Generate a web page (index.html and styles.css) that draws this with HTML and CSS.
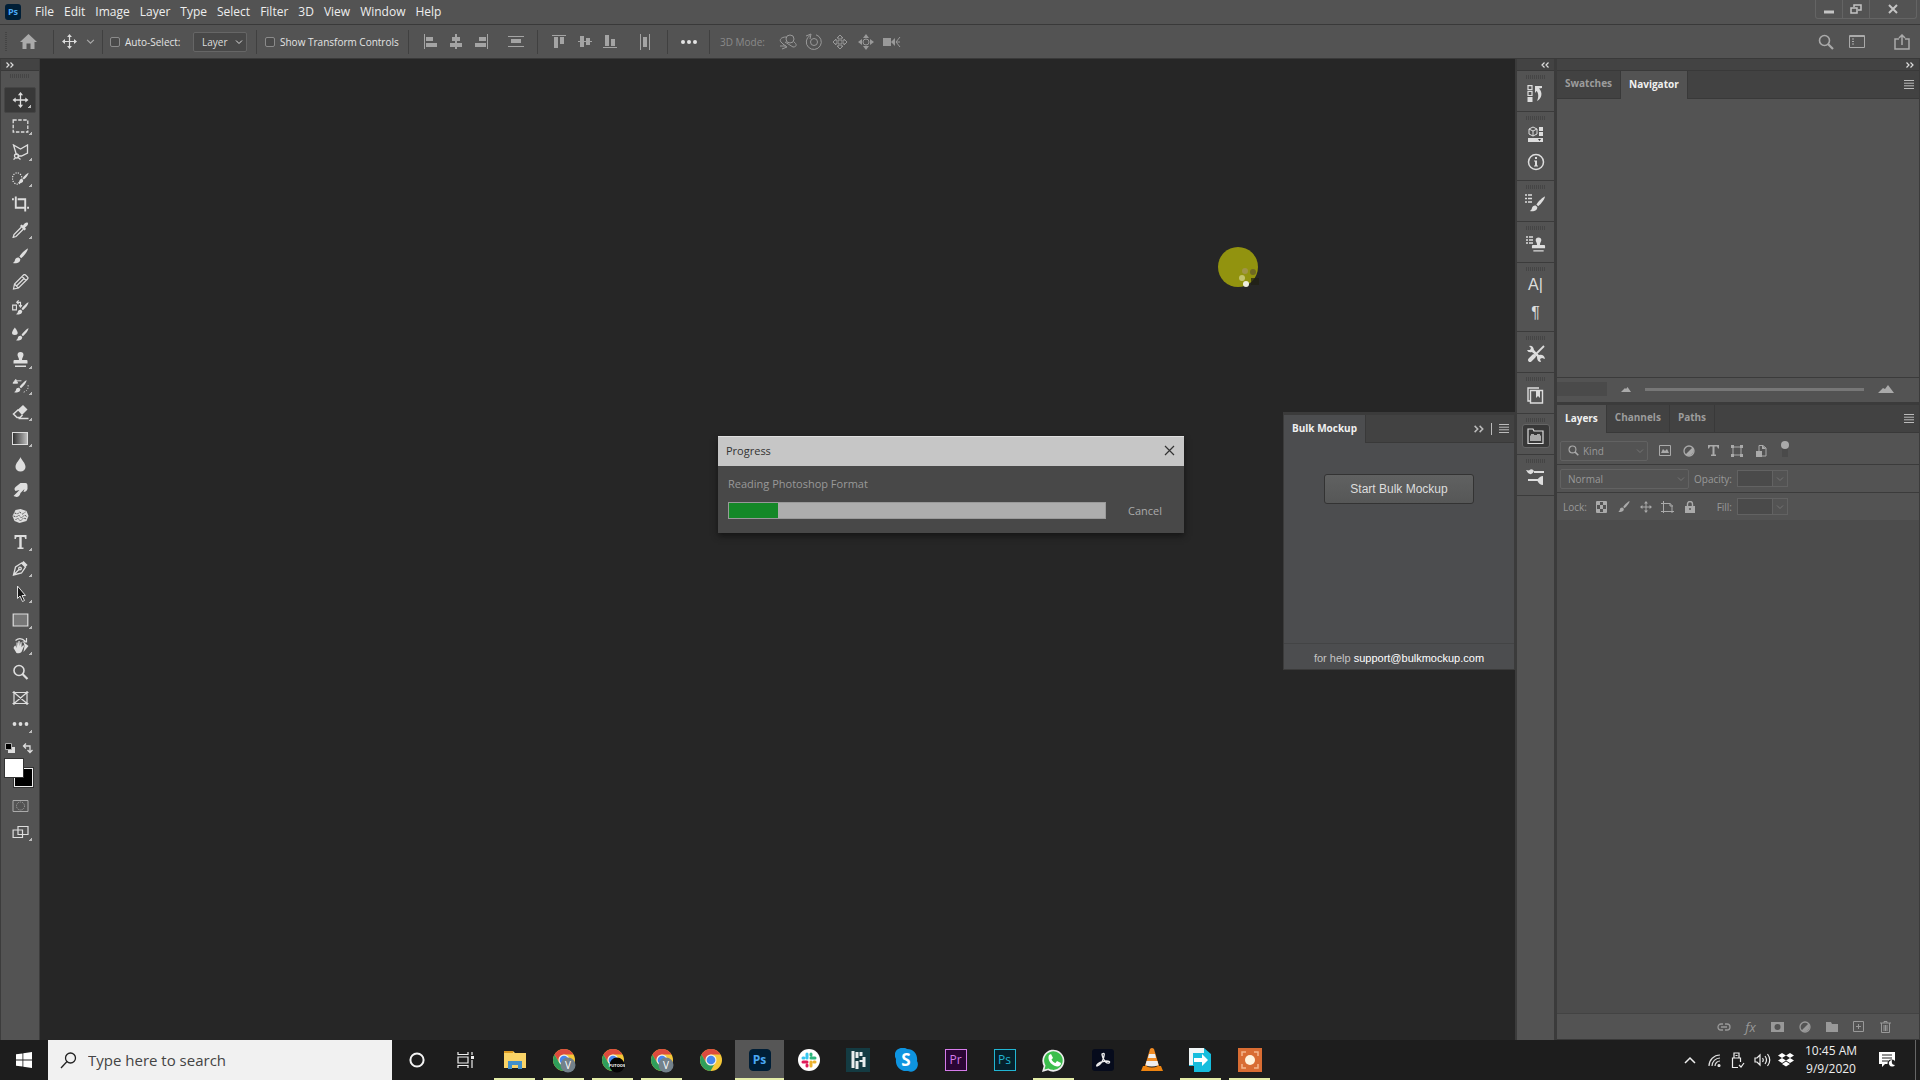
FILE: index.html
```
<!DOCTYPE html>
<html lang="en">

<head>
    <meta charset="UTF-8">
    <meta name="viewport" content="width=device-width, initial-scale=1.0">
    <title>Photoshop</title>
    <link rel="stylesheet" href="styles.css">
</head>

<body>
    <svg class="symbols" aria-hidden="true">
        <symbol id="move" viewBox="0 0 16 16">
            <path d="M8 2v12M2 8h12" fill="none" stroke="currentColor" stroke-width="1.3" />
            <path d="M8 0l2.6 3.2H5.4zM8 16l2.6-3.2H5.4zM0 8l3.2-2.6v5.2zM16 8l-3.2-2.6v5.2z" fill="currentColor" />
        </symbol>
        <symbol id="brush" viewBox="0 0 16 16">
            <path d="M15.5.5c-2 .6-6.500 4.500-8.600 8l1.800 1.700C12 7.500 15.200 3 15.500.5z" fill="currentColor" />
            <path d="M6.200 9.500c-2-.3-3.300.7-3.700 2.500C2.200 13.600 1.300 14.500.3 15c3 .9 7.700.2 7.500-3.900z" fill="currentColor" />
        </symbol>
        <symbol id="stamp" viewBox="0 0 16 16">
            <path d="M8 0a3 3 0 0 1 3 3c0 1.500-1.500 2.500-1.500 5H14q1 0 1 1v2.500H1V9q0-1 1-1h4.500c0-2.500-1.500-3.500-1.500-5a3 3 0 0 1 3-3zM2.500 13.500h11V15h-11z" fill="currentColor" />
        </symbol>
        <symbol id="chev" viewBox="0 0 8 8">
            <path d="M1 2.5l3 3 3-3" fill="none" stroke="currentColor" />
        </symbol>
        <symbol id="lines" viewBox="0 0 10 9">
            <path d="M0 .5h10M0 3.2h10M0 5.8h10M0 8.5h10" stroke="currentColor" />
        </symbol>
        <symbol id="left" viewBox="0 0 8 6">
            <path d="M3.5.5L1 3l2.500 2.500M7.500.5L5 3l2.500 2.500" fill="none" stroke="currentColor" stroke-width="1.2" />
        </symbol>
        <symbol id="right" viewBox="0 0 8 6">
            <path d="M.5.5L3 3 .5 5.500M4.500.5L7 3 4.500 5.500" fill="none" stroke="currentColor" stroke-width="1.2" />
        </symbol>
        <symbol id="contrast" viewBox="0 0 12 12">
            <circle cx="6" cy="6" r="5" fill="none" stroke="currentColor" stroke-width="1.3" />
            <path d="M9.5 2.5a5 5 0 0 1-7 7z" fill="currentColor" />
        </symbol>
        <symbol id="glass" viewBox="0 0 16 16">
            <circle cx="6.5" cy="6.5" r="5" fill="none" stroke="currentColor" stroke-width="1.6" />
            <path d="M10 10l5 5" stroke="currentColor" stroke-width="2.2" />
        </symbol>
        <symbol id="chrome" viewBox="0 0 24 24">
            <circle cx="12" cy="12" r="11" fill="#f5c838" />
            <path d="M2.5 6.5A11 11 0 0 1 21.500 6.500H12A5.500 5.500 0 0 0 7.200 14.700z" fill="#dc4b3e" />
            <path d="M2.5 6.5A11 11 0 0 0 11.500 23l4.300-7.500A5.500 5.500 0 0 1 7.200 14.700z" fill="#2f9e5b" />
            <circle cx="12" cy="12" r="5.5" fill="#eee" />
            <circle cx="12" cy="12" r="4.3" fill="#4586ee" />
        </symbol>
    </svg>

    <header class="menu-bar">
        <span class="ps-logo">Ps</span>
        <nav class="menus">
            <button>File</button>
            <button>Edit</button>
            <button>Image</button>
            <button>Layer</button>
            <button>Type</button>
            <button>Select</button>
            <button>Filter</button>
            <button>3D</button>
            <button>View</button>
            <button>Window</button>
            <button>Help</button>
        </nav>
        <div class="window-buttons">
            <button aria-label="Minimize"><svg width="10" height="10"><path d="M0 8h10" stroke="#c4c4c4" stroke-width="3" /></svg></button>
            <button aria-label="Restore"><svg width="12" height="10" fill="none" stroke="#c4c4c4" stroke-width="1.5"><path d="M4 3V1h7v5H8M1 4h6v5H1z" /></svg></button>
            <button class="wide" aria-label="Close"><svg width="10" height="10"><path d="M1 1l8 8M9 1L1 9" stroke="#c4c4c4" stroke-width="2" /></svg></button>
        </div>
    </header>

    <div class="options-bar">
        <span class="grip-v"></span>
        <button class="home" aria-label="Home"><svg width="17" height="15"><path d="M8.500 0L17 8h-2.500v7h-4V9.500h-4V15h-4V8H0z" fill="#aaa" /></svg></button>
        <span class="sep"></span>
        <button class="current-tool" aria-label="Move tool"><svg width="15" height="15"><use href="#move" /></svg><svg class="dim" width="9" height="9"><use href="#chev" /></svg></button>
        <span class="sep"></span>
        <label class="check auto"><input type="checkbox">Auto-Select:</label>
        <div class="select layer-select">
            <select aria-label="Auto-Select target"><option>Layer</option></select>
            <svg width="8" height="8"><use href="#chev" /></svg>
        </div>
        <span class="sep"></span>
        <label class="check transform"><input type="checkbox">Show Transform Controls</label>
        <span class="sep"></span>
        <div class="icons align-a">
            <button aria-label="Align left edges"><svg width="14" height="15"><path d="M0 0h1v15H0zM2 3h7v4H2zM2 9h11v4H2z" /></svg></button>
            <button aria-label="Align horizontal centers"><svg width="14" height="15"><path d="M6 0h2v15H6zM3 3h8v4H3zM1 9h12v4H1z" /></svg></button>
            <button aria-label="Align right edges"><svg width="14" height="15"><path d="M13 0h1v15h-1zM5 3h7v4H5zM1 9h11v4H1z" /></svg></button>
            <button class="apart" aria-label="Distribute vertically"><svg width="16" height="15"><path d="M0 2h16v1H0zM3 5h10v4H3zM0 12h16v1H0z" /></svg></button>
        </div>
        <span class="sep"></span>
        <div class="icons align-b">
            <button aria-label="Align top edges"><svg width="14" height="15"><path d="M0 1h14v1H0zM2 3h4v11H2zM8 3h4v7H8z" /></svg></button>
            <button aria-label="Align vertical centers"><svg width="14" height="15"><path d="M0 7h14v1H0zM2 2h4v11H2zM8 4h4v7H8z" /></svg></button>
            <button aria-label="Align bottom edges"><svg width="14" height="15"><path d="M0 13h14v1H0zM2 1h4v11H2zM8 5h4v7H8z" /></svg></button>
            <button class="apart" aria-label="Distribute horizontally"><svg width="12" height="16"><path d="M1 0h1v16H1zM4 3h4v10H4zM10 0h1v16h-1z" /></svg></button>
        </div>
        <span class="sep"></span>
        <button class="more" aria-label="More options"><svg width="16" height="4" fill="#e4e4e4"><circle cx="2" cy="2" r="2" /><circle cx="8" cy="2" r="2" /><circle cx="14" cy="2" r="2" /></svg></button>
        <span class="sep"></span>
        <span class="mode">3D Mode:</span>
        <div class="icons mode-icons">
            <button aria-label="Orbit"><svg width="18" height="16" class="line"><circle cx="11" cy="5" r="4" /><path d="M7 3C2 3 0 6 2 8l3 3M6 8l8 5c4 0 4-3 1-5M1 12h6M4 10l4 3-5 2" /></svg></button>
            <button aria-label="Roll"><svg width="18" height="18" class="line"><circle cx="9" cy="9" r="3.5" /><path d="M5 2.500A7.500 7.500 0 1 0 11 1.800M1 3l5-2-1 5" /></svg></button>
            <button aria-label="Pan"><svg width="16" height="16" class="line"><path d="M8 1l3 3H9v3h3V5l3 3-3 3V9H9v3h2l-3 3-3-3h2V9H4v2L1 8l3-3v2h3V4H5z" /></svg></button>
            <button aria-label="Slide"><svg width="16" height="16"><circle cx="8" cy="8" r="3" fill="none" stroke="#999" /><path d="M8 0l3 4H5zM8 16l3-4H5zM0 8l4-3v6zM16 8l-4-3v6z" /></svg></button>
            <button aria-label="Camera zoom"><svg width="18" height="12"><path d="M0 2h8v8H0zM8 6l4-4v8z" /><path d="M17 1l-4 5 4 5M13 6h4" fill="none" stroke="#999" /></svg></button>
        </div>
        <div class="bar-right">
            <button aria-label="Search"><svg width="16" height="16"><use href="#glass" /></svg></button>
            <button aria-label="Workspace"><svg width="16" height="13" fill="none" stroke="currentColor"><path d="M.5.5h15v12H.5zM.5 1.500h15M3 4h2M3 6.500h2M3 9h2" /></svg></button>
            <button aria-label="Share"><svg width="16" height="16" fill="none" stroke="currentColor" stroke-width="1.5"><path d="M5 5H1v10h14V5h-4M8 11V1M5 4l3-3 3 3" /></svg></button>
        </div>
    </div>

    <main class="workspace">
        <aside class="toolbar">
            <div class="strip"><svg width="8" height="6"><use href="#right" /></svg></div>
            <span class="grip"></span>
            <div class="tools">
                <button class="tool active more-tools" aria-label="Move"><svg><use href="#move" /></svg></button>
                <button class="tool more-tools" aria-label="Marquee"><svg viewBox="0 0 16 16"><path d="M.7 2h14.600v12H.7z" fill="none" stroke="currentColor" stroke-width="1.3" stroke-dasharray="3.5 1.5" /></svg></button>
                <button class="tool more-tools" aria-label="Lasso"><svg viewBox="0 0 16 16" fill="none" stroke="currentColor" stroke-width="1.3"><path d="M4 11L1 1l7 4 7-4v8l-6 3H5" /><circle cx="4" cy="12" r="2" /><path d="M5 13l3 2.500M3 14l-2 1.500" /></svg></button>
                <button class="tool more-tools" aria-label="Quick selection"><svg viewBox="0 0 18 16"><ellipse cx="5.5" cy="8.5" rx="5" ry="6" fill="none" stroke="currentColor" stroke-width="1.3" stroke-dasharray="1.3 1.3" /><use href="#brush" x="6" y="1" width="12" height="14" /></svg></button>
                <button class="tool" aria-label="Crop"><svg viewBox="0 0 18 16" fill="none" stroke="currentColor" stroke-width="2"><path d="M4 0v12h9M16 12h2M0 3h2M6 3h8v13" /></svg></button>
                <button class="tool more-tools" aria-label="Eyedropper"><svg viewBox="0 0 16 16"><path d="M9 5L1.500 12.500l-.8 2.800 2.800-.8L11 7" fill="none" stroke="currentColor" stroke-width="1.3" /><path d="M7.500 4L9 2.500l1.500 1C12 1 14 0 15.300.8 16.200 2 15 4 12.500 5.500l1 1.500L12 8.500z" fill="currentColor" /></svg></button>
                <button class="tool" aria-label="Brush"><svg><use href="#brush" /></svg></button>
                <button class="tool" aria-label="Pencil"><svg viewBox="0 0 16 16" fill="none" stroke="currentColor" stroke-width="1.2"><path d="M1 15l1-5L11 1q1-1 2 0l2 2q1 1 0 2l-9 9zM2 10l4 4M9.500 2.500l4 4M4 12L12 4" /></svg></button>
                <button class="tool" aria-label="Color replacement"><svg viewBox="0 0 18 16"><path d="M.7 5h4v5h-4zM5 2h4v4M7 0L5 2l2 2M7.500 5L9 7l1.500-2" fill="none" stroke="currentColor" stroke-width="1.2" /><use href="#brush" x="4" y="1" width="14" height="15" /></svg></button>
                <button class="tool" aria-label="Mixer brush"><svg viewBox="0 0 18 16"><path d="M3 1q6 8 0 8t0-8z" fill="currentColor" /><use href="#brush" x="4" y="1" width="14" height="15" /></svg></button>
                <button class="tool more-tools" aria-label="Clone stamp"><svg><use href="#stamp" /></svg></button>
                <button class="tool more-tools" aria-label="History brush"><svg viewBox="0 0 18 16"><path d="M1 5l3-4 2 4zM5 2.500h5" fill="currentColor" stroke="currentColor" /><use href="#brush" x="2" y="1" width="14" height="15" /><path d="M17 7q1 6-6 8" fill="none" stroke="currentColor" stroke-dasharray="1.3 1.5" /></svg></button>
                <button class="tool more-tools" aria-label="Eraser"><svg viewBox="0 0 16 16"><path d="M5 6l5.500-5 4.500 4.500L9.500 11z" fill="currentColor" /><path d="M6 5.500L1 10l3.500 3.500h3L10 11M6 14.400h10" fill="none" stroke="currentColor" stroke-width="1.5" /></svg></button>
                <button class="tool more-tools" aria-label="Gradient"><span class="gradient"></span></button>
                <button class="tool" aria-label="Blur"><svg viewBox="0 0 16 16"><path d="M8 1c1 3 5 6 5 10a5 4.500 0 0 1-10 0c0-4 4-7 5-10z" fill="currentColor" /></svg></button>
                <button class="tool" aria-label="Smudge"><svg viewBox="0 0 16 16"><path d="M1 14L7 8 3 9Q1 7 3 5L8 1h5q2 0 2 3v3q-1 3-4 3l1-3-4 4q-1 4-4 4z" fill="currentColor" /></svg></button>
                <button class="tool" aria-label="Sponge"><svg viewBox="0 0 16 16"><path d="M3 2l5-1 6 2 2 5-2 5-7 2-5-2-2-5z" fill="currentColor" /><path d="M2 5l3 1 2-2 3 2 3-2M1 8l3 1 2-2 3 3 3-3 3 2M3 12l2-2 3 3 3-3 3 1" fill="none" stroke="#535353" stroke-dasharray="2 1" /></svg></button>
                <button class="tool more-tools" aria-label="Type"><svg viewBox="0 0 16 16"><path d="M2 1h12v4h-1.300L12 3H9.200v10.500H11V15H5v-1.500h1.800V3H4l-.7 2H2z" fill="currentColor" /></svg></button>
                <button class="tool more-tools" aria-label="Pen"><svg viewBox="0 0 16 16" fill="none" stroke="currentColor" stroke-width="1.3"><path d="M1 15l2-8 6-4 4 4-4 6zM1 15l5.500-5.500" /><circle cx="7.5" cy="8.5" r="1.3" /><path d="M10 2l4 4" stroke-width="3" /></svg></button>
                <button class="tool more-tools" aria-label="Path selection"><svg viewBox="0 0 16 16"><path d="M5 0v12.500l2.500-2.500 2.500 5.500 2-1-2.500-5H13z" fill="#1b1b1b" stroke="currentColor" /></svg></button>
                <button class="tool more-tools" aria-label="Rectangle"><svg viewBox="0 0 16 16"><path d="M.7 2h14.600v12H.7z" fill="#777" stroke="currentColor" stroke-width="1.2" /></svg></button>
                <button class="tool more-tools" aria-label="Rotate view"><svg viewBox="0 0 16 16"><path d="M2 8l1-.5L4 10V4.500h1.200V8l.8-5h1.200v5l1-4 1 .2-.2 5 1.500-2 1.200.5L9 14q-2 2-5 1L1 10zM11 4l5 4-5 6 1-6z" fill="currentColor" /><path d="M3 2.500q5-4 10 1M14 0v4h-4" fill="none" stroke="currentColor" stroke-width="1.2" /></svg></button>
                <button class="tool" aria-label="Zoom"><svg><use href="#glass" /></svg></button>
                <button class="tool" aria-label="Frame"><svg viewBox="0 0 16 16" fill="none" stroke="currentColor" stroke-width="1.2"><path d="M1.500 2.500h13v11h-13zM1.500 2.500l13 11M14.500 2.500l-13 11M0 2.500h16M0 13.500h16M1.500 1v14M14.500 1v14" /></svg></button>
                <button class="tool more-tools" aria-label="Edit toolbar"><svg viewBox="0 0 16 16" fill="currentColor"><circle cx="2" cy="8" r="1.9" /><circle cx="8" cy="8" r="1.9" /><circle cx="14" cy="8" r="1.9" /></svg></button>
            </div>
            <div class="swatch-controls">
                <svg width="10" height="10"><path d="M3 4h7v6H3z" fill="#ddd" /><path d="M.5.5h6v6h-6z" fill="#000" stroke="#aaa" /></svg>
                <svg width="11" height="11" fill="none" stroke="#ddd"><path d="M2 3h6v6M4 .5L1.500 3 4 5.500M5.500 7L8 9.500 10.500 7" stroke-width="1.3" /></svg>
            </div>
            <div class="swatches"><span class="back"></span><span class="front"></span></div>
            <button class="tool mask" aria-label="Quick mask"><svg viewBox="0 0 16 16" fill="none" stroke="#aaa"><path d="M.5 2.500h15v11H.5z" /><circle cx="8" cy="8" r="4" stroke-dasharray="1 1" /></svg></button>
            <button class="tool more-tools" aria-label="Screen mode"><svg viewBox="0 0 16 16" fill="#535353" stroke="currentColor" stroke-width="1.2"><path d="M.6 6h9.400v7.500H.6zM5.500 2.500h10v8h-10z" /></svg></button>
        </aside>

        <section class="canvas">
            <div class="progress-dialog">
                <div class="dialog-title">
                    <span>Progress</span>
                    <button aria-label="Close"><svg width="11" height="11"><path d="M1 1l9 9M10 1l-9 9" stroke="#333" stroke-width="1.2" /></svg></button>
                </div>
                <div class="dialog-body">
                    <label for="reading">Reading Photoshop Format</label>
                    <div class="progress-row">
                        <progress id="reading" value="13" max="100"></progress>
                        <button>Cancel</button>
                    </div>
                </div>
            </div>

            <div class="pointer">
                <svg width="52" height="42"><circle cx="20" cy="20" r="20" fill="#92930f" /><path d="M33 31h8v7h-8z" fill="#202013" opacity=".7" /><circle cx="27" cy="24" r="3" fill="#a09447" /><circle cx="35" cy="25" r="3" fill="#6f6922" /><circle cx="24" cy="31" r="3" fill="#c3c36d" /><circle cx="28" cy="37" r="3" fill="#eeeedd" /></svg>
            </div>

            <div class="bulk-panel">
                <div class="tabs">
                    <button class="tab on">Bulk Mockup</button>
                    <div class="tabs-end">
                        <button aria-label="Collapse"><svg width="10" height="8"><use href="#right" /></svg></button>
                        <span class="bar"></span>
                        <button aria-label="Panel menu"><svg width="10" height="9"><use href="#lines" /></svg></button>
                    </div>
                </div>
                <div class="bulk-body"><button class="start">Start Bulk Mockup</button></div>
                <div class="bulk-help">for help <a href="mailto:support@bulkmockup.com">support@bulkmockup.com</a></div>
            </div>
        </section>

        <aside class="dock">
            <div class="strip end"><svg width="8" height="6"><use href="#left" /></svg></div>
            <div class="group"><span class="grip"></span>
                <button aria-label="History"><svg width="17" height="17"><path d="M1 .7h4v4H1zM1 6.500h4v4H1z" fill="none" stroke="currentColor" stroke-width="1.2" /><path d="M.5 12h5v5h-5zM8 1h7v2l-3 .5c4 4 3 10-2 12.500 2-4 1.500-8-.5-10L8 8z" fill="currentColor" /></svg></button>
            </div>
            <div class="group"><span class="grip"></span>
                <button aria-label="Libraries"><svg width="16" height="17"><path d="M5 1l4 2v5l-4 2-4-2V3zM1 3l4 2 4-2M5 5v5" fill="none" stroke="currentColor" /><path d="M11 1h4v4h-4zM11 6h4v4h-4zM0 12h15v4H0z" fill="currentColor" /><path d="M10 13h3l-1.500 2z" fill="#333" /></svg></button>
                <button aria-label="Info"><svg width="18" height="18"><circle cx="9" cy="9" r="7.5" fill="none" stroke="currentColor" stroke-width="1.5" /><path d="M8 4h2v2H8zM7 7.500h3v5h1v1H7v-1h1v-4H7z" fill="currentColor" /></svg></button>
            </div>
            <div class="group"><span class="grip"></span>
                <button aria-label="Brush settings"><svg width="21" height="18"><path d="M0 1h2M3 1h4M0 4.500h2M3 4.500h4M0 8h2M3 8h4" stroke="currentColor" stroke-width="1.3" /><use href="#brush" x="4" y="2" width="17" height="16" /></svg></button>
            </div>
            <div class="group"><span class="grip"></span>
                <button aria-label="Clone source"><svg width="20" height="18"><path d="M0 2h2M3 2h4M0 5h2M3 5h4M0 8h2M3 8h4" stroke="currentColor" stroke-width="1.3" /><use href="#stamp" x="5" y="2" width="15" height="16" /></svg></button>
            </div>
            <div class="group"><span class="grip"></span>
                <button class="character" aria-label="Character">A|</button>
                <button class="character" aria-label="Paragraph">¶</button>
            </div>
            <div class="group"><span class="grip"></span>
                <button aria-label="Tool presets"><svg width="20" height="18"><path d="M1 5L4 5 5 3 3 1q4-1 5 4l5 5q5-1 6 4l-3-1-2 1 1 3q-4 0-4-5L6 7Q2 8 1 5z" fill="currentColor" /><path d="M16 3l-5 5" stroke="#535353" stroke-width="4" /><path d="M18 1l-8 8" stroke="currentColor" stroke-width="1.8" /><path d="M9 10l-5 5" stroke="#535353" stroke-width="6" /><path d="M8 11l-4 4" stroke="currentColor" stroke-width="4" stroke-linecap="round" /></svg></button>
            </div>
            <div class="group"><span class="grip"></span>
                <button aria-label="Notes"><svg width="17" height="17"><path d="M12 1H1v13h2M3.500 3.500h12v12.500h-12z" fill="none" stroke="currentColor" stroke-width="1.4" /><path d="M9 4h4v7L11 9l-2 2z" fill="currentColor" /></svg></button>
            </div>
            <div class="group"><span class="grip"></span>
                <button class="pressed" aria-label="Bulk Mockup"><svg width="17" height="17"><path d="M1 1h5l1 2h9v12.500H1z" fill="none" stroke="currentColor" stroke-width="1.2" /><path d="M3 8l1-1V6h3v1h3V6h3v1l1 1v5H3z" fill="#aaa" /></svg></button>
            </div>
            <div class="group"><span class="grip"></span>
                <button aria-label="Brushes"><svg width="19" height="18"><path d="M0 2l3 .5Q6 0 8 3q-2 5-6 2zM8 3h10v2H8zM2 11h10v2H2zM11 12q3-4 6-4v9q-4 0-6-5z" fill="currentColor" /></svg></button>
            </div>
        </aside>

        <aside class="panels">
            <div class="strip end"><svg width="8" height="6"><use href="#right" /></svg></div>
            <div class="tabs">
                <button class="tab">Swatches</button>
                <button class="tab on">Navigator</button>
                <div class="tabs-end"><button aria-label="Panel menu"><svg width="10" height="9"><use href="#lines" /></svg></button></div>
            </div>
            <div class="navigator"></div>
            <div class="zoom-row">
                <input class="field" type="text" aria-label="Zoom level" disabled>
                <svg width="10" height="6" fill="#aaa"><path d="M0 6l4-4 1 1 1.500-2L10 6z" /></svg>
                <input type="range" aria-label="Zoom" disabled>
                <svg width="16" height="8" fill="#aaa"><path d="M0 8l5-5 2 1 3-4 6 8z" /></svg>
            </div>

            <div class="tabs layers-tabs">
                <button class="tab on">Layers</button>
                <button class="tab">Channels</button>
                <button class="tab">Paths</button>
                <div class="tabs-end"><button aria-label="Panel menu"><svg width="10" height="9"><use href="#lines" /></svg></button></div>
            </div>
            <div class="row filter-row">
                <div class="select kind-select">
                    <svg width="11" height="11"><use href="#glass" /></svg>
                    <select aria-label="Filter type" disabled><option>Kind</option></select>
                    <svg class="faint" width="8" height="8"><use href="#chev" /></svg>
                </div>
                <div class="row-icons">
                    <button aria-label="Pixel layers"><svg width="12" height="11"><path d="M.5.5h11v10H.5z" fill="none" stroke="currentColor" /><path d="M2 8l2-4 2 2 2-2 2 4z" fill="currentColor" /></svg></button>
                    <button aria-label="Adjustment layers"><svg width="12" height="12"><use href="#contrast" /></svg></button>
                    <button aria-label="Type layers"><svg width="11" height="11"><path d="M0 0h11v3.500h-1L9 1.500H6.500v8H8V11H3V9.500h1.500v-8H2l-1 2H0z" fill="currentColor" /></svg></button>
                    <button aria-label="Shape layers"><svg width="12" height="12"><path d="M2 2h8v8H2z" fill="none" stroke="currentColor" /><path d="M0 0h3v3H0zM9 0h3v3H9zM0 9h3v3H0zM9 9h3v3H9z" fill="currentColor" /></svg></button>
                    <button aria-label="Smart objects"><svg width="11" height="12"><path d="M3 6V.5h4L10 3v8H6" fill="none" stroke="currentColor" /><path d="M0 6h6v6H0zM6 0v4h4z" fill="currentColor" /></svg></button>
                    <button aria-label="Toggle filtering"><svg width="8" height="20"><path d="M1 6h6v10H1z" fill="#4a4a4a" /><circle cx="4" cy="4" r="4" fill="currentColor" /></svg></button>
                </div>
            </div>
            <div class="row blend-row">
                <div class="select blend-select">
                    <select aria-label="Blend mode" disabled><option>Normal</option></select>
                    <svg class="faint" width="8" height="8"><use href="#chev" /></svg>
                </div>
                <label class="amount-label" for="opacity">Opacity:</label>
                <div class="amount"><input id="opacity" type="text" disabled><svg width="8" height="8"><use href="#chev" /></svg></div>
            </div>
            <div class="row lock-row">
                <span>Lock:</span>
                <div class="row-icons lock-icons">
                    <button aria-label="Lock transparency"><svg width="11" height="12"><path d="M.5.5h10v11H.5z" fill="none" stroke="currentColor" /><path d="M1 1h3v3H1zM7 1h3v3H7zM4 4h3v4H4zM1 8h3v3H1zM7 8h3v3H7z" fill="currentColor" /></svg></button>
                    <button aria-label="Lock pixels"><svg width="12" height="13"><use href="#brush" /></svg></button>
                    <button aria-label="Lock position"><svg width="12" height="12"><use href="#move" /></svg></button>
                    <button aria-label="Lock artboard"><svg width="13" height="12" fill="none" stroke="currentColor"><path d="M2.500 0v12M0 2.500h9l2 2V12M0 10.500h13M9 2v3h3" /></svg></button>
                    <button aria-label="Lock all"><svg width="10" height="12"><path d="M2.500 6V3a2.500 2.500 0 0 1 5 0v3" fill="none" stroke="currentColor" stroke-width="1.4" /><path d="M0 5h10v7H0z" fill="currentColor" /><circle cx="5" cy="8" r="1" fill="#535353" /></svg></button>
                </div>
                <label class="amount-label" for="fill">Fill:</label>
                <div class="amount"><input id="fill" type="text" disabled><svg width="8" height="8"><use href="#chev" /></svg></div>
            </div>
            <div class="layer-list"></div>
            <div class="layer-actions">
                <button aria-label="Link layers"><svg width="14" height="8" fill="none" stroke="currentColor" stroke-width="1.3"><path d="M6 1H4a3 3 0 0 0 0 6h2M8 1h2a3 3 0 0 1 0 6H8M4 4h6" /></svg></button>
                <button class="fx" aria-label="Layer style">fx</button>
                <button aria-label="Add mask"><svg width="13" height="10"><path d="M0 0h13v10H0z" fill="currentColor" /><circle cx="6.5" cy="5" r="3" fill="#535353" /></svg></button>
                <button aria-label="Adjustment"><svg width="12" height="12"><use href="#contrast" /></svg></button>
                <button aria-label="New group"><svg width="12" height="10"><path d="M0 0h5l1 2h6v8H0z" fill="currentColor" /></svg></button>
                <button aria-label="New layer"><svg width="11" height="11" fill="none" stroke="currentColor"><path d="M.5.5h10v10H.5zM5.500 3v5M3 5.500h5" /></svg></button>
                <button aria-label="Delete"><svg width="11" height="12" fill="none" stroke="currentColor"><path d="M0 2h11M4 2V.5h3V2M1.500 2v9.500h8V2M4 4v6M5.500 4v6M7 4v6" /></svg></button>
            </div>
        </aside>
    </main>

    <footer class="taskbar">
        <button class="start-menu" aria-label="Start"><svg width="16" height="16" fill="#fff"><path d="M0 2.300L6.500 1.400v6.200H0zM7.300 1.300L16 0v7.600H7.300zM0 8.400h6.500v6.200L0 13.700zM7.300 8.400H16V16l-8.700-1.300z" /></svg></button>
        <div class="search">
            <svg width="17" height="17" fill="none" stroke="#222" stroke-width="1.3"><circle cx="10.5" cy="6" r="5" /><path d="M7 9.500L1 16" /></svg>
            <input type="text" placeholder="Type here to search" aria-label="Type here to search">
        </div>
        <div class="apps">
            <button aria-label="Cortana"><svg width="16" height="16"><circle cx="8" cy="8" r="6.6" fill="none" stroke="#f4f4f4" stroke-width="2" /></svg></button>
            <button aria-label="Task view"><svg width="17" height="16" fill="none" stroke="#eee" stroke-width="1.2"><path d="M1 0v2.500h10V0M1 5h10v6H1zM1 16v-2.500h10V16M15 0v3M15 8v8" /><path d="M14 4h3v3h-3z" fill="#eee" stroke="none" /></svg></button>
            <button class="open" aria-label="File Explorer"><svg width="22" height="20"><path d="M0 1h9l2 2h11v15H0z" fill="#f9d367" /><path d="M0 1h9v2H0z" fill="#dd9b22" /><path d="M4 19v-8h14v8h-4v-4H8v4z" fill="#4290cb" /></svg></button>
            <button class="open" aria-label="Chrome profile V"><svg width="25" height="26"><use href="#chrome" x="1" y="1" width="24" height="24" /><circle cx="17" cy="18" r="7.5" fill="#73818b" /><text class="badge" x="17" y="22">V</text></svg></button>
            <button class="open" aria-label="Chrome profile Putoos"><svg width="25" height="26"><use href="#chrome" x="1" y="1" width="24" height="24" /><circle cx="17" cy="18" r="7.5" fill="#050505" /><text class="badge tiny" x="17" y="20">PUTOOS</text></svg></button>
            <button class="open" aria-label="Chrome profile V 2"><svg width="25" height="26"><use href="#chrome" x="1" y="1" width="24" height="24" /><circle cx="17" cy="18" r="7.5" fill="#73818b" /><text class="badge" x="17" y="22">V</text></svg></button>
            <button aria-label="Chrome"><svg width="24" height="24"><use href="#chrome" /></svg></button>
            <button class="open current" aria-label="Photoshop"><span class="app-tile ps">Ps</span></button>
            <button aria-label="Slack"><svg width="22" height="22"><circle cx="11" cy="11" r="11" fill="#fff" /><g fill="none" stroke-width="3" stroke-linecap="round"><path d="M9 5v4M5 9h1" stroke="#36c5f0" /><path d="M13 9h4M13 5v1" stroke="#2eb67d" /><path d="M13 13v4M16 13h1" stroke="#ecb22e" /><path d="M9 13H5M9 16v1" stroke="#e01e5a" /></g></svg></button>
            <button aria-label="Hubstaff"><svg width="24" height="24"><path d="M0 0h24v24H0z" fill="#143b42" /><path d="M7 3v17M11 4v6M11 13v8M15 4v4M15 12v2M18 9v10" fill="none" stroke="#e9eeee" stroke-width="3" /></svg></button>
            <button aria-label="Skype"><svg width="23" height="24"><path d="M7 0a7 7 0 0 1 5 1c7 0 11 6 10 12 3 5-2 13-9 10C5 24 0 18 1 11-2 6 1 0 7 0z" fill="#0e94e0" /><text class="skype-s" x="11" y="18">S</text></svg></button>
            <button aria-label="Premiere Pro"><span class="app-tile pr">Pr</span></button>
            <button aria-label="Photoshop CC"><span class="app-tile old">Ps</span></button>
            <button class="open" aria-label="WhatsApp"><svg width="23" height="23"><path d="M0 23l1.700-6A11 11 0 1 1 6 21.300z" fill="#eee" /><path d="M2.500 20.500l1-4a9.300 9.300 0 1 1 3 3z" fill="#3bbe4c" /><path d="M7 6l2-1 2 4-1.500 1.500c1 2 2 3 4 3.500L15 12l4 2c0 3-3 4-6 3-4-1.500-8-6-6-11z" fill="#fff" /></svg></button>
            <button aria-label="Acrobat"><svg width="22" height="22"><rect width="22" height="22" rx="3" fill="#060b1c" /><path d="M10 5q3-2 2 2-1 6-5 9-3 2-2 0 2-3 9-4 5 0 3 2-3 1-6-5-1-3-1-4z" fill="none" stroke="#eee" stroke-width="1.4" /></svg></button>
            <button aria-label="VLC"><svg width="22" height="24"><path d="M9 1q2-2 4 0l5 17H4z" fill="#f08b24" /><path d="M8 6h6l1 4H7zM5.500 13h11l1 4q-7 3-13 0z" fill="#eee" /><path d="M2 18h3q6 3 12 0h3l2 5H0z" fill="#ee8410" /></svg></button>
            <button class="open" aria-label="Transfer"><svg width="23" height="24"><path d="M0 0h15l7 6v16l-2 2H5V18H0z" fill="#16bddd" /><path d="M0 0h15v5H4v12H0z" fill="#f0f5f6" /><path d="M5 10h8V6l6 6-6 6v-4H5z" fill="#fff" /></svg></button>
            <button class="open" aria-label="Recorder"><svg width="24" height="24"><path d="M0 0h24v24H0z" fill="#d96d33" /><circle cx="12" cy="12" r="5" fill="#fff4df" /><path d="M4 8V4h4M16 4h4v4M4 16v4h4M16 20h4v-4" fill="none" stroke="#f3b68d" stroke-width="1.5" /></svg></button>
        </div>
        <div class="tray">
            <button aria-label="Show hidden icons"><svg width="12" height="8"><path d="M1 7l5-5 5 5" fill="none" stroke="#eee" stroke-width="1.5" /></svg></button>
            <button aria-label="Network"><svg width="13" height="13" fill="none" stroke="#ddd" stroke-width="1.2"><path d="M1 12A11 11 0 0 1 12 1M4 12a8 8 0 0 1 8-8M7 12a5 5 0 0 1 5-5" /><circle cx="11" cy="11.5" r="1" fill="#eee" /></svg></button>
            <button aria-label="Eject hardware"><svg width="14" height="17" fill="none" stroke="#eee" stroke-width="1.2"><path d="M3 6V1h5v5M7 15.500H1.500V6h8v4M8 13l2 2 3-4M4.500 3.500h2" /></svg></button>
            <button aria-label="Volume"><svg width="17" height="14" fill="none" stroke="#eee" stroke-width="1.2"><path d="M1 5h2l3-3v10L3 9H1zM8.500 5q1.500 2 0 4M11 3q3 4 0 8M13.500 1q4.500 6 0 12" /></svg></button>
            <button aria-label="Dropbox"><svg width="16" height="14" fill="#fff"><path d="M4 0l4 2.500L4 5 0 2.500zM12 0l4 2.500L12 5 8 2.500zM4 5l4 2.500L4 10 0 7.500zM12 5l4 2.500-4 2.500-4-2.500zM8 8.500l4 2.500-4 2.500L4 11z" /></svg></button>
            <time class="clock" datetime="2020-09-09T10:45"><span>10:45 AM</span><span>9/9/2020</span></time>
            <button class="notify" aria-label="Notifications"><svg width="17" height="17"><path d="M0 0h16v12H6l-3 3v-3H0z" fill="#fff" /><path d="M3 3h10M3 6h10M3 9h6" stroke="#222" /><circle cx="12.5" cy="11.5" r="4" fill="#222" /><path d="M13 8a3.300 3.300 0 1 0 3 5q-4 0-3-5z" fill="#fff" /></svg></button>
        </div>
    </footer>
</body>

</html>
```

FILE: styles.css
```
* {
    box-sizing: border-box;
}

body {
    margin: 0;
    height: 100vh;
    display: flex;
    flex-direction: column;
    overflow: hidden;
    background: #262626;
    color: #ddd;
    font-family: "Open Sans", "Noto Sans", sans-serif;
    font-size: 10px;
}

button,
select,
input {
    font: inherit;
    color: inherit;
}

button {
    display: flex;
    align-items: center;
    justify-content: center;
    padding: 0;
    border: none;
    background: none;
}

svg {
    display: block;
    flex: none;
}

.symbols {
    display: none;
}

/* menu bar */
.menu-bar {
    display: flex;
    flex: none;
    height: 25px;
    padding-left: 5px;
    background: #535353;
    border-bottom: 1px solid #393939;
}

.ps-logo {
    width: 16px;
    height: 16px;
    margin-top: 4px;
    border-radius: 3px;
    background: #001e36;
    color: #4aa8f5;
    font-size: 9px;
    font-weight: bold;
    line-height: 15px;
    text-align: center;
}

.menus {
    display: flex;
    gap: 10px;
    padding-left: 14px;
    padding-bottom: 1px;
    font-size: 12px;
    color: #eee;
}

.window-buttons {
    display: flex;
    height: 19px;
    margin-left: auto;
    margin-right: 3px;
    border: 1px solid #646464;
    border-top: none;
    border-radius: 0 0 3px 3px;
}

.window-buttons button {
    width: 27px;
    border-right: 1px solid #646464;
}

.window-buttons .wide {
    width: 46px;
    border-right: none;
}

/* options bar */
.options-bar {
    display: flex;
    flex: none;
    align-items: center;
    height: 34px;
    background: #535353;
    border-bottom: 1px solid #393939;
}

.grip-v {
    width: 2px;
    height: 20px;
    margin-left: 5px;
    background: repeating-linear-gradient(#444 0 1px, #535353 1px 2px);
}

.sep {
    flex: none;
    width: 1px;
    height: 24px;
    background: #404040;
}

.home {
    width: 46px;
    padding-right: 4px;
}

.current-tool {
    width: 48px;
    gap: 9px;
}

.dim {
    color: #aaa;
}

.check {
    display: flex;
    align-items: center;
    gap: 5px;
    padding-left: 7px;
    white-space: nowrap;
    color: #e4e4e4;
}

.auto {
    width: 90px;
}

.transform {
    width: 151px;
    padding-left: 8px;
}

.check input {
    appearance: none;
    width: 10px;
    height: 10px;
    margin: 0;
    border: 1px solid #8b8b8b;
    border-radius: 2px;
    background: #4a4a4a;
}

.select {
    display: flex;
    align-items: center;
    height: 20px;
    padding-right: 3px;
    border: 1px solid #666;
    border-radius: 2px;
}

.select select {
    flex: 1;
    min-width: 0;
    padding: 0;
    appearance: none;
    border: none;
    background: none;
    opacity: 1;
}

.layer-select {
    width: 54px;
    margin-right: 9px;
    padding-left: 8px;
    background: #484848;
}

.icons {
    display: flex;
    fill: #a4a4a4;
}

.icons button {
    width: 26px;
}

.icons .apart {
    width: 44px;
}

.align-a {
    width: 128px;
    padding-left: 9px;
}

.align-b {
    width: 129px;
    padding-left: 8px;
}

.more {
    width: 41px;
}

.mode {
    width: 55px;
    padding-left: 10px;
    color: #8a8a8a;
    white-space: nowrap;
}

.mode-icons {
    margin-left: 10px;
    fill: #999;
}

.line {
    fill: none;
    stroke: #999;
}

.bar-right {
    display: flex;
    gap: 15px;
    margin-left: auto;
    padding-right: 10px;
    color: #aaa;
}

.bar-right button:last-child {
    margin-left: 14px;
}

/* workspace */
.workspace {
    display: flex;
    flex: 1;
    min-height: 0;
}

.strip {
    display: flex;
    flex: none;
    align-items: center;
    height: 12px;
    padding: 0 5px;
    background: #434343;
    border-bottom: 1px solid #393939;
}

.strip.end {
    justify-content: flex-end;
}

.grip {
    display: block;
    width: 20px;
    height: 4px;
    margin: 0 auto;
    background: repeating-linear-gradient(90deg, #454545 0 1px, #535353 1px 2px);
}

.toolbar {
    flex: none;
    width: 40px;
    background: #535353;
    border: solid #3c3c3c;
    border-width: 0 1px;
}

.toolbar .grip {
    margin-top: 3px;
}

.tools {
    padding-top: 9px;
}

.tool {
    position: relative;
    width: 32px;
    height: 26px;
    margin: 0 auto;
    color: #dedede;
}

.tool svg {
    width: 17px;
    height: 16px;
}

.tool.active {
    background: #383838;
    border: 1px solid #454545;
    border-radius: 2px;
}

/* corner mark for tools with a flyout */
.more-tools::after {
    content: "";
    position: absolute;
    right: 4px;
    bottom: 4px;
    width: 3px;
    height: 3px;
    background: linear-gradient(135deg, transparent 40%, #bbb 40%);
}

.gradient {
    width: 16px;
    height: 13px;
    border: 1px solid #ddd;
    background: linear-gradient(90deg, #333, #bbb);
}

.swatch-controls {
    display: flex;
    justify-content: space-between;
    padding: 6px 6px 0 4px;
}

.swatches {
    display: grid;
    grid-template: 10px 20px / 10px 20px;
    width: 30px;
    height: 30px;
    margin: 4px 0 5px 3px;
}

.front {
    grid-area: 1 / 1;
    width: 20px;
    height: 20px;
    background: #fff;
    border: 1px solid #333;
}

.back {
    grid-area: 2 / 2;
    width: 19px;
    height: 19px;
    background: #000;
    border: 1px solid #eee;
    outline: 1px solid #333;
}

.canvas {
    position: relative;
    flex: 1;
    min-width: 0;
    background: #262626;
}

/* floating windows */
.progress-dialog {
    position: absolute;
    left: 678px;
    top: 377px;
    width: 466px;
    background: #484848;
    box-shadow: 0 3px 6px #151515;
}

.dialog-title {
    display: flex;
    align-items: center;
    justify-content: space-between;
    height: 30px;
    padding: 0 9px 2px 8px;
    background: #c6c6c6;
    border-top: 1px solid #ddd;
    color: #333;
    font-size: 11px;
}

.dialog-body {
    padding: 10px 20px 14px 10px;
    color: #999;
    font-size: 11px;
    line-height: 16px;
}

.progress-row {
    display: flex;
    align-items: center;
    justify-content: space-between;
    gap: 22px;
    height: 17px;
    margin-top: 10px;
}

.progress-row progress {
    flex: 1;
    height: 17px;
    appearance: none;
    border: 1px solid #999;
    background: #adadad;
}

.progress-row progress::-webkit-progress-bar {
    background: #adadad;
}

.progress-row progress::-webkit-progress-value {
    background: #148827;
}

.progress-row button {
    padding-right: 2px;
    color: #aaa;
}

.pointer {
    position: absolute;
    left: 1178px;
    top: 188px;
}

.bulk-panel {
    position: absolute;
    right: 0;
    top: 353px;
    width: 232px;
    height: 258px;
    display: flex;
    flex-direction: column;
    background: #4c4d4f;
    border: solid #3b3b3b;
    border-width: 3px 1px 1px;
}

.tabs {
    display: flex;
    flex: none;
    height: 28px;
    background: #424242;
    border-bottom: 1px solid #393939;
    font-weight: bold;
}

.tab {
    padding: 0 8px 3px;
    border-right: 1px solid #393939;
    color: #9c9c9c;
}

.tab.on {
    margin-bottom: -1px;
    background: #535353;
    color: #f0f0f0;
}

.bulk-panel .on {
    background: #4c4d4f;
}

.tabs-end {
    display: flex;
    align-items: center;
    gap: 7px;
    margin-left: auto;
    padding-right: 5px;
    color: #bbb;
}

.bar {
    width: 1px;
    height: 12px;
    background: #bbb;
}

.bulk-body {
    flex: 1;
    padding-top: 31px;
    font-family: "Liberation Sans", Arial, sans-serif;
}

.start {
    width: 150px;
    height: 30px;
    margin: 0 auto;
    border: 1px solid #333;
    border-radius: 3px;
    background: linear-gradient(#606161, #565757);
    color: #ddd;
    font-size: 12px;
}

.bulk-help {
    height: 26px;
    border-top: 1px solid #434445;
    color: #c4c4c4;
    font: 11px/28px "Liberation Sans", Arial, sans-serif;
    text-align: center;
}

.bulk-help a {
    color: #fff;
    text-decoration: none;
}

/* icon dock */
.dock {
    flex: none;
    width: 41px;
    background: #535353;
    border: solid #3b3b3b;
    border-width: 0 2px;
}

.group {
    padding: 4px 0;
    border-bottom: 1px solid #3b3b3b;
}

.group button {
    width: 28px;
    height: 28px;
    margin: 0 auto;
    color: #ddd;
}

.group .pressed {
    height: 24px;
    margin: 2px auto;
    border: 1px solid #666;
    border-radius: 3px;
    background: #383838;
}

.group .character {
    font-family: "Liberation Sans", Arial, sans-serif;
    font-size: 16px;
}

/* right panels */
.panels {
    display: flex;
    flex: none;
    flex-direction: column;
    width: 364px;
    background: #535353;
    border-right: 1px solid #3b3b3b;
    border-left: 1px solid #3b3b3b;
}

.navigator {
    flex: none;
    height: 279px;
    border-bottom: 1px solid #3b3b3b;
}

.zoom-row {
    display: flex;
    flex: none;
    align-items: center;
    gap: 14px;
    height: 24px;
    padding: 0 25px 2px 0;
}

.field {
    width: 50px;
    height: 14px;
    border: none;
    background: #4a4a4a;
}

.zoom-row input[type="range"] {
    flex: 1;
    height: 3px;
    margin: 0;
    appearance: none;
    background: #777;
}

.zoom-row input::-webkit-slider-thumb {
    appearance: none;
    width: 0;
}

.layers-tabs {
    height: 31px;
    border-top: 3px solid #3b3b3b;
}

.row {
    display: flex;
    flex: none;
    align-items: center;
    height: 28px;
    padding-left: 3px;
    border-bottom: 1px solid #3b3b3b;
    color: #999;
}

.row svg {
    color: #aaa;
}

.row .faint,
.amount svg {
    color: #747474;
}

.filter-row {
    height: 32px;
    padding-top: 4px;
}

.lock-row {
    padding-left: 6px;
    border-color: #4c4c4c;
}

.kind-select {
    width: 88px;
    gap: 4px;
    padding-left: 7px;
}

.blend-select {
    width: 129px;
    padding-left: 7px;
}

.row .select {
    border-color: #626262;
}

.row-icons {
    display: flex;
    padding-left: 5px;
}

.row-icons button {
    width: 24px;
}

.lock-icons {
    padding-left: 4px;
}

.lock-icons button {
    width: 22px;
}

.amount-label {
    margin-left: auto;
    padding-right: 5px;
}

.amount {
    display: flex;
    align-items: center;
    width: 51px;
    height: 17px;
    margin-right: 131px;
    padding-right: 3px;
    border: 1px solid #626262;
}

.amount input {
    flex: 1;
    min-width: 0;
    height: 15px;
    margin-right: 3px;
    padding: 0;
    border: none;
    border-right: 1px solid #626262;
    background: #4a4a4a;
}

.layer-list {
    flex: 1;
    background: #4c4c4c;
}

.layer-actions {
    display: flex;
    flex: none;
    align-items: center;
    justify-content: flex-end;
    height: 27px;
    padding-right: 20px;
    border-top: 1px solid #434343;
    border-bottom: 1px solid #393939;
    color: #999;
}

.layer-actions button {
    width: 27px;
}

.layer-actions .fx {
    font-size: 13px;
    font-style: italic;
}

/* taskbar */
.taskbar {
    display: flex;
    flex: none;
    height: 40px;
    background: #1d1d1d;
    color: #eee;
}

.start-menu {
    width: 48px;
}

.search {
    display: flex;
    align-items: center;
    gap: 11px;
    width: 344px;
    padding-left: 12px;
    background: #f1f1f1;
}

.search input {
    flex: 1;
    min-width: 0;
    padding: 0;
    border: none;
    background: none;
    font-size: 15px;
}

.search input::placeholder {
    color: #444;
}

.apps {
    display: flex;
}

.apps button {
    width: 49px;
    border: solid transparent;
    border-width: 2px 4px;
}

.apps .open {
    border-image: linear-gradient(90deg, transparent 4px, #e4eda8 4px 45px, transparent 45px) 0 4 2;
}

.apps .current {
    background: #565656;
    border-image: linear-gradient(#e4eda8, #e4eda8) 0 4 2;
    border-width: 2px 0;
}

.badge {
    fill: #fff;
    font-size: 10px;
    text-anchor: middle;
}

.badge.tiny {
    font-size: 4px;
    font-weight: bold;
}

.skype-s {
    fill: #fff;
    font-size: 17px;
    font-weight: bold;
    text-anchor: middle;
}

.app-tile {
    width: 22px;
    height: 22px;
    font-size: 12px;
    line-height: 19px;
    text-align: center;
    border: 1px solid;
}

.ps {
    border-color: #001e36;
    border-radius: 4px;
    background: #001e36;
    color: #4aa8f5;
    font-weight: bold;
}

.pr {
    background: #2a0634;
    color: #d57bea;
}

.old {
    background: #06202b;
    color: #21b5d2;
}

.tray {
    display: flex;
    margin-left: auto;
    padding-right: 4px;
}

.tray button {
    width: 24px;
}

.clock {
    display: flex;
    flex-direction: column;
    justify-content: center;
    width: 66px;
    font-size: 12px;
    line-height: 18px;
    text-align: center;
    white-space: nowrap;
}

.tray .notify {
    width: 52px;
    padding-right: 4px;
    border-right: 1px solid #666;
}
```
